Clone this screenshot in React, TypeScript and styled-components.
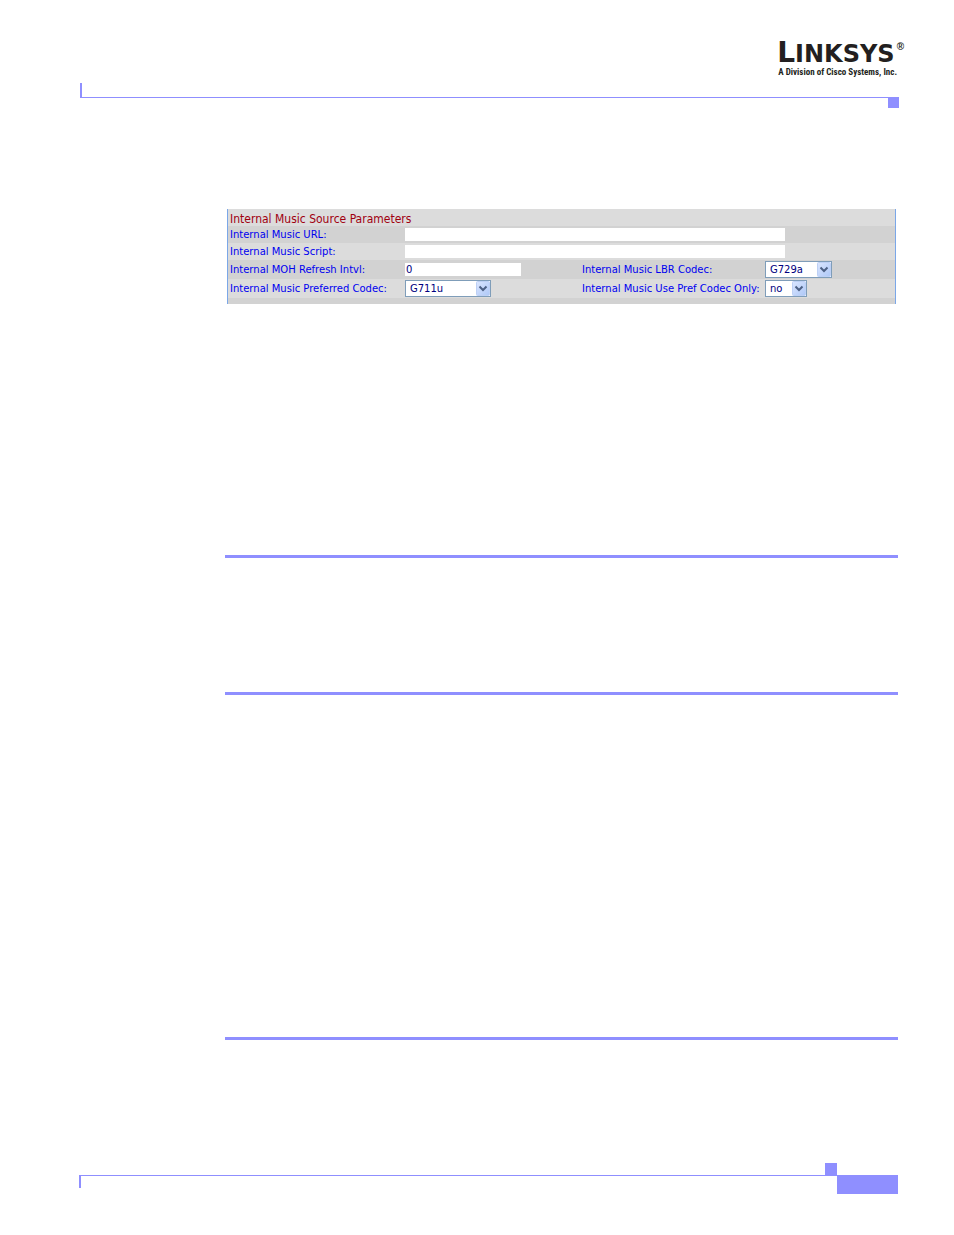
import React from "react";
import styled, { createGlobalStyle } from "styled-components";

const accent = "#8f8fff";

const GlobalStyle = createGlobalStyle`
  *, *::before, *::after { box-sizing: border-box; }
  body { margin: 0; background: #fff; }
`;

const Page = styled.div`
  display: flex;
  flex-direction: column;
  padding: 40px 56px 40px 80px;
`;

const Header = styled.header`
  display: flex;
  flex-direction: column;
  margin-right: -1px;
`;

const Brand = styled.a`
  align-self: flex-end;
  display: flex;
  flex-direction: column;
  height: 43px;
  margin-right: -5px;
  color: #231f20;
  text-decoration: none;
`;

const Wordmark = styled.span`
  display: flex;
  align-items: baseline;
  height: 24px;
  font: bold 24px/26px "DejaVu Sans", Verdana, sans-serif;
`;

const Initial = styled.span`
  font-size: 28px;
`;

const Registered = styled.sup`
  align-self: flex-start;
  margin-left: 2px;
  font: bold 10px/14px "Liberation Sans", Arial, sans-serif;
`;

const Tagline = styled.span`
  padding-left: 1px;
  font: bold 9px/16px "Liberation Sans Narrow", "Roboto Condensed", "Liberation Sans", sans-serif;
  white-space: nowrap;
`;

const HeaderRule = styled.div`
  height: 15px;
  border-left: 2px solid ${accent};
  border-bottom: 1px solid ${accent};
`;

const HeaderMark = styled.div`
  align-self: flex-end;
  width: 11px;
  height: 10px;
  background: ${accent};
`;

const Main = styled.main`
  display: flex;
  flex-direction: column;
  margin-left: 145px;
  padding-top: 101px;
`;

const Panel = styled.form`
  margin: 0 2px;
  border: solid #7ba7e8;
  border-width: 0 1px;
  background: #d2d2d2;
  padding-bottom: 6px;
  font: 10px/16px "DejaVu Sans", Verdana, sans-serif;
  color: #0000f0;
`;

const PanelTitle = styled.h2`
  margin: 0;
  padding: 2px 2px 0;
  height: 17px;
  background: #dcdcdc;
  color: #a00010;
  font: 12px/17px "DejaVu Sans Condensed", Tahoma, sans-serif;
`;

const Row = styled.div<{ $light?: boolean; $tall?: boolean }>`
  display: grid;
  grid-template-columns: 175px 177px 183px 1fr;
  align-items: center;
  height: ${(p) => (p.$tall ? 19 : 17)}px;
  padding-left: 2px;
  background: ${(p) => (p.$light ? "#dcdcdc" : "#d2d2d2")};
`;

const Label = styled.label`
  white-space: nowrap;
`;

const TextField = styled.input<{ $wide?: boolean }>`
  grid-column: ${(p) => (p.$wide ? "2 / -1" : "auto")};
  width: ${(p) => (p.$wide ? 380 : 116)}px;
  height: 13px;
  border: 0;
  padding: 0 1px;
  background: #fff;
  color: #000080;
  font: 10px/13px "DejaVu Sans", Verdana, sans-serif;
`;

const SelectBox = styled.span<{ $width: number }>`
  position: relative;
  display: block;
  width: ${(p) => p.$width}px;
  height: 17px;
`;

const Select = styled.select`
  display: block;
  appearance: none;
  width: 100%;
  height: 17px;
  border: 1px solid #7f9db9;
  border-radius: 0;
  padding: 0 16px 0 4px;
  background: #fff;
  color: #000080;
  font: 10px/15px "DejaVu Sans", Verdana, sans-serif;
`;

const Arrow = styled.svg`
  position: absolute;
  top: 1px;
  right: 1px;
  pointer-events: none;
`;

const Divider = styled.hr<{ $gap: number }>`
  width: 100%;
  height: 3px;
  margin: ${(p) => p.$gap}px 0 0;
  border: 0;
  background: ${accent};
`;

const Footer = styled.footer`
  display: flex;
  align-items: flex-start;
  margin: 123px 0 0 -1px;
`;

const FooterRule = styled.div`
  flex: 1;
  display: flex;
  flex-direction: column;
`;

const FooterMark = styled.div`
  align-self: flex-end;
  width: 12px;
  height: 12px;
  background: ${accent};
`;

const FooterLine = styled.div`
  height: 13px;
  border-left: 2px solid ${accent};
  border-top: 1px solid ${accent};
`;

const PageTab = styled.div`
  width: 61px;
  height: 19px;
  margin-top: 12px;
  background: ${accent};
`;

type DropDownProps = { id: string; width: number; value: string; options: string[] };

function DropDown({ id, width, value, options }: DropDownProps) {
  return (
    <SelectBox $width={width}>
      <Select id={id} defaultValue={value}>
        {options.map((o) => (
          <option key={o}>{o}</option>
        ))}
      </Select>
      <Arrow width="14" height="15" viewBox="0 0 14 15" aria-hidden="true">
        <defs>
          <linearGradient id={`${id}-fill`} x1="0" y1="0" x2="1" y2="1">
            <stop offset="0" stopColor="#dbe6ff" />
            <stop offset="1" stopColor="#aec8f7" />
          </linearGradient>
        </defs>
        <rect x="0.5" y="0.5" width="13" height="14" rx="1" fill={`url(#${id}-fill)`} stroke="#bdd0f5" />
        <path d="M3.5 5.5 L7 9 L10.5 5.5" fill="none" stroke="#4d6185" strokeWidth="2" />
      </Arrow>
    </SelectBox>
  );
}

const codecs = ["G711u", "G711a", "G726-16", "G726-24", "G726-32", "G726-40", "G729a", "G723"];

export default function App() {
  return (
    <>
      <GlobalStyle />
      <Page>
        <Header>
          <Brand href="#">
            <Wordmark>
              <Initial>L</Initial>INKSYS<Registered>®</Registered>
            </Wordmark>
            <Tagline>A Division of Cisco Systems, Inc.</Tagline>
          </Brand>
          <HeaderRule />
          <HeaderMark />
        </Header>
        <Main>
          <Panel>
            <PanelTitle>Internal Music Source Parameters</PanelTitle>
            <Row>
              <Label htmlFor="url">Internal Music URL:</Label>
              <TextField id="url" $wide />
            </Row>
            <Row $light>
              <Label htmlFor="script">Internal Music Script:</Label>
              <TextField id="script" $wide />
            </Row>
            <Row $tall>
              <Label htmlFor="refresh">Internal MOH Refresh Intvl:</Label>
              <TextField id="refresh" defaultValue="0" />
              <Label htmlFor="lbr">Internal Music LBR Codec:</Label>
              <DropDown id="lbr" width={67} value="G729a" options={codecs} />
            </Row>
            <Row $light $tall>
              <Label htmlFor="preferred">Internal Music Preferred Codec:</Label>
              <DropDown id="preferred" width={86} value="G711u" options={codecs} />
              <Label htmlFor="only">Internal Music Use Pref Codec Only:</Label>
              <DropDown id="only" width={42} value="no" options={["no", "yes"]} />
            </Row>
          </Panel>
          <Divider $gap={251} />
          <Divider $gap={134} />
          <Divider $gap={342} />
        </Main>
        <Footer>
          <FooterRule>
            <FooterMark />
            <FooterLine />
          </FooterRule>
          <PageTab />
        </Footer>
      </Page>
    </>
  );
}
